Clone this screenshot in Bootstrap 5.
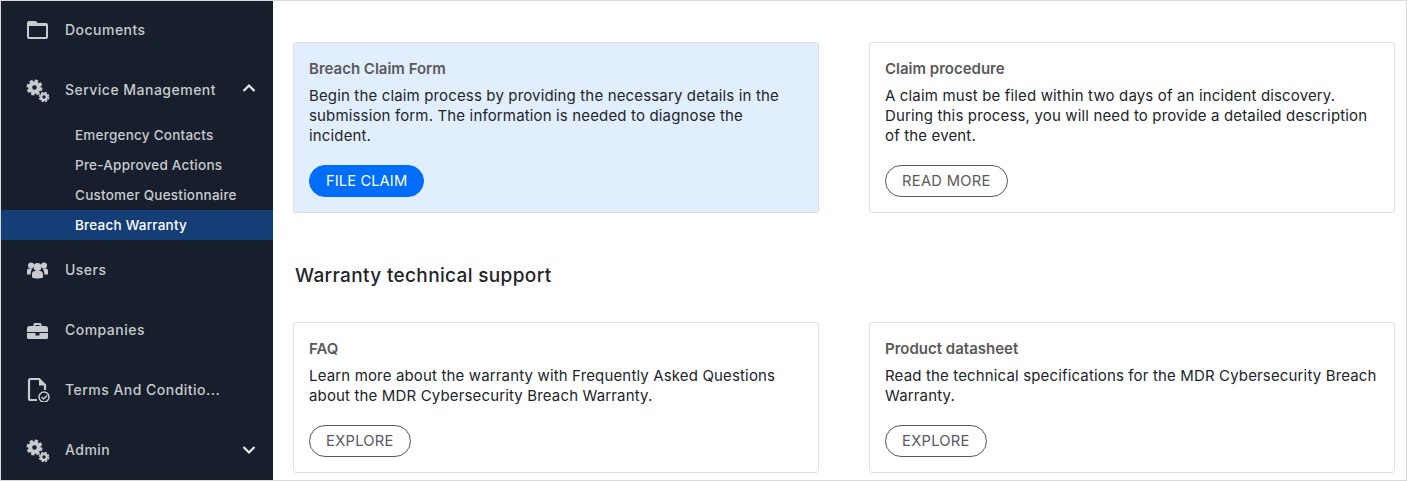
<!DOCTYPE html>
<html lang="en">
<head>
<meta charset="UTF-8" />
<meta name="viewport" content="width=device-width, initial-scale=1.0" />
<title>Breach Warranty</title>
<link href="https://cdn.jsdelivr.net/npm/bootstrap@5.3.0/dist/css/bootstrap.min.css" rel="stylesheet" />
<style>
  html, body { height: 100%; overflow: hidden; }
  body { font-family: Inter, "Open Sans", sans-serif; font-size: 15px; line-height: 20px; letter-spacing: .15px; color: #212529; }
  .app-frame { height: 481px; border: 1px solid #d9d9d9; overflow: hidden; }
  .side-panel { width: 272px; height: 520px; margin-top: -1px; background: #161f2b; color: #c8cbcf; flex: none; }
  .side-item { height: 60px; padding: 0 16px 0 24px; color: #c8cbcf; font-size: 14px; font-weight: 500; letter-spacing: .48px; }
  .side-ico { width: 26px; height: 24px; margin-right: 14px; flex: none; fill: #c8cbcf; }
  .side-chev { width: 14px; height: 10px; fill: none; stroke: #e6e8ea; stroke-width: 2.2; margin-right: 1px; }
  .side-sub { height: 30px; padding-left: 74px; font-size: 13.5px; letter-spacing: .23px; color: #c8cbcf; font-weight: 500; }
  .side-sub.on { background: #163e76; color: #fff; }
  .main-area { padding: 41px 11px 0 20px; }
  .info-box { width: 526px; border: 1px solid #dedede; border-radius: 3px; padding: 16px 15px 15px; }
  .info-box.blue { background: #e1eefd; }
  .box-title { font-weight: 600; color: #595959; margin-bottom: 7px; letter-spacing: 0; }
  .box-text { margin-bottom: 19px; }
  .pill { height: 32px; border-radius: 16px; padding: 0 16px; font-size: 14.7px; line-height: 30px; letter-spacing: .3px; border: 1px solid #595959; color: #595959; background: #fff; }
  .pill.fill { background: #006efa; border-color: #006efa; color: #fff; letter-spacing: .1px; }
  .sect-title { font-size: 19px; font-weight: 500; letter-spacing: .35px; margin: 51px 0 34px 2px; line-height: 24px; }
</style>
</head>
<body>
<div class="app-frame d-flex">
  <div class="side-panel">
    <div class="side-item d-flex align-items-center">
      <svg class="side-ico" viewBox="0 0 26 24"><path fill-rule="evenodd" d="M4 3h6.500L13 5h8a2 2 0 0 1 2 2v12a2 2 0 0 1-2 2H4a2 2 0 0 1-2-2V5a2 2 0 0 1 2-2zm0 5v11h17V8z"/></svg>
      <span>Documents</span>
    </div>
    <div class="side-item d-flex align-items-center">
      <svg class="side-ico" viewBox="0 0 26 24"><g fill="none" stroke="#c8cbcf"><circle cx="9.500" cy="9.500" r="4.300" stroke-width="4"/><circle cx="9.500" cy="9.500" r="6.800" stroke-width="2.400" stroke-dasharray="3.340 2"/><circle cx="19" cy="19" r="2.800" stroke-width="2.200"/><circle cx="19" cy="19" r="4.400" stroke-width="1.800" stroke-dasharray="2.300 1.150"/></g></svg>
      <span>Service Management</span>
      <svg class="side-chev ms-auto mb-1" viewBox="0 0 14 10"><path d="M1.500 8 7 2.500 12.500 8"/></svg>
    </div>
    <div class="side-sub d-flex align-items-center">Emergency Contacts</div>
    <div class="side-sub d-flex align-items-center">Pre-Approved Actions</div>
    <div class="side-sub d-flex align-items-center">Customer Questionnaire</div>
    <div class="side-sub on d-flex align-items-center">Breach Warranty</div>
    <div class="side-item d-flex align-items-center">
      <svg class="side-ico" viewBox="0 0 26 24"><circle cx="6" cy="7.500" r="3"/><circle cx="19" cy="7.500" r="3"/><circle cx="12.500" cy="9" r="3.900"/><path d="M2 16.500v-3.500c0-1.800 1-2.500 2.500-2.500h3c-1 1-1.800 3-1.800 6zM23 16.500v-3.500c0-1.800-1-2.500-2.500-2.500h-3c1 1 1.800 3 1.800 6zM7 19.500V16c0-2 1.500-3 3-3h5c1.500 0 3 1 3 3v3.500c-3 1.300-8 1.300-11 0z"/></svg>
      <span>Users</span>
    </div>
    <div class="side-item d-flex align-items-center">
      <svg class="side-ico" viewBox="0 0 26 24"><path fill-rule="evenodd" d="M8.500 8V6.500C8.500 5.500 9.300 5 10 5h5c.7 0 1.500.5 1.500 1.500V8h4c1.500 0 2.500 1 2.500 2.500V14H2v-3.500C2 9 3 8 4.500 8zm2 0h4V7h-4z"/><path d="M2 15h8.500v2.500h4V15H23v4.500c0 1-1 1.500-2 1.500H4c-1 0-2-.5-2-1.500z"/></svg>
      <span>Companies</span>
    </div>
    <div class="side-item d-flex align-items-center">
      <svg class="side-ico" viewBox="0 0 26 24"><path fill="none" stroke="#c8cbcf" stroke-width="2.200" d="M12 22H5.500A1.500 1.500 0 0 1 4 20.500V2.500A1.500 1.500 0 0 1 5.500 1H14l6 6v5"/><path d="M14 0.500 21 7.500h-7z"/><circle cx="19" cy="19" r="5" fill="none" stroke="#c8cbcf" stroke-width="1.500"/><path d="M16.500 19l2 2 3.500-3.500" fill="none" stroke="#c8cbcf" stroke-width="1.500"/></svg>
      <span>Terms And Conditio...</span>
    </div>
    <div class="side-item d-flex align-items-center">
      <svg class="side-ico" viewBox="0 0 26 24"><g fill="none" stroke="#c8cbcf"><circle cx="9.500" cy="9.500" r="4.300" stroke-width="4"/><circle cx="9.500" cy="9.500" r="6.800" stroke-width="2.400" stroke-dasharray="3.340 2"/><circle cx="19" cy="19" r="2.800" stroke-width="2.200"/><circle cx="19" cy="19" r="4.400" stroke-width="1.800" stroke-dasharray="2.300 1.150"/></g></svg>
      <span>Admin</span>
      <svg class="side-chev ms-auto" viewBox="0 0 14 10"><path d="M1.500 2 7 7.500 12.500 2"/></svg>
    </div>
  </div>
  <div class="main-area flex-grow-1">
    <div class="d-flex justify-content-between">
      <div class="info-box blue">
        <div class="box-title">Breach Claim Form</div>
        <p class="box-text">Begin the claim process by providing the necessary details in the submission form. The information is needed to diagnose the incident.</p>
        <button class="btn pill fill">FILE CLAIM</button>
      </div>
      <div class="info-box">
        <div class="box-title">Claim procedure</div>
        <p class="box-text">A claim must be filed within two days of an incident discovery. During this process, you will need to provide a detailed description of the event.</p>
        <button class="btn pill">READ MORE</button>
      </div>
    </div>
    <div class="sect-title">Warranty technical support</div>
    <div class="d-flex justify-content-between">
      <div class="info-box">
        <div class="box-title">FAQ</div>
        <p class="box-text">Learn more about the warranty with Frequently Asked Questions about the MDR Cybersecurity Breach Warranty.</p>
        <button class="btn pill">EXPLORE</button>
      </div>
      <div class="info-box">
        <div class="box-title">Product datasheet</div>
        <p class="box-text">Read the technical specifications for the MDR Cybersecurity Breach Warranty.</p>
        <button class="btn pill">EXPLORE</button>
      </div>
    </div>
  </div>
</div>
<script src="https://cdn.jsdelivr.net/npm/bootstrap@5.3.0/dist/js/bootstrap.bundle.min.js"></script>
</body>
</html>
